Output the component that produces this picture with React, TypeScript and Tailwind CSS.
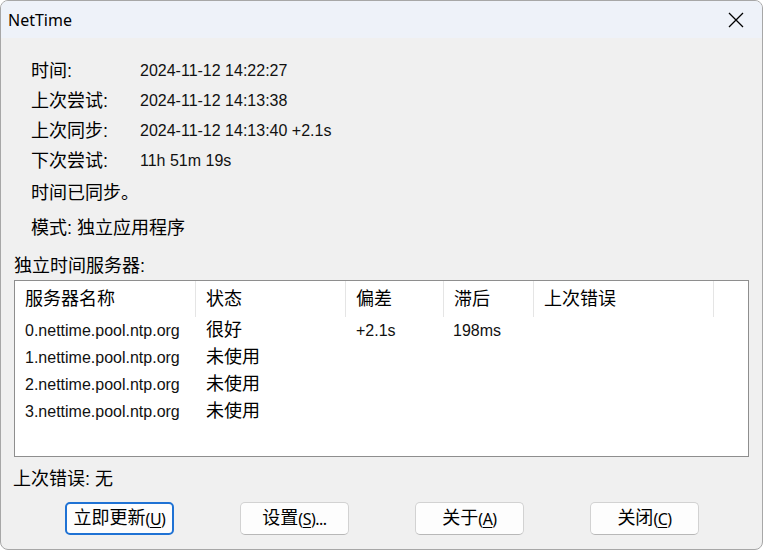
import React from "react";

const cjk = "font-['Liberation_Sans','Noto_Sans_CJK_SC',sans-serif]";
const latin = "font-['Liberation_Sans',Arial,sans-serif]";

const info = [
  { label: "时间:", value: "2024-11-12 14:22:27" },
  { label: "上次尝试:", value: "2024-11-12 14:13:38" },
  { label: "上次同步:", value: "2024-11-12 14:13:40 +2.1s" },
  { label: "下次尝试:", value: "11h 51m 19s" },
];

const columns = [
  { title: "服务器名称", width: "w-[181px]" },
  { title: "状态", width: "w-[150px]" },
  { title: "偏差", width: "w-[98px]" },
  { title: "滞后", width: "w-[90px]" },
  { title: "上次错误", width: "w-[180px]" },
];

const servers = [
  { name: "0.nettime.pool.ntp.org", status: "很好", offset: "+2.1s", lag: "198ms" },
  { name: "1.nettime.pool.ntp.org", status: "未使用", offset: "", lag: "" },
  { name: "2.nettime.pool.ntp.org", status: "未使用", offset: "", lag: "" },
  { name: "3.nettime.pool.ntp.org", status: "未使用", offset: "", lag: "" },
];

function DialogButton({ label, hotkey, suffix, focused }: { label: string; hotkey: string; suffix?: string; focused?: boolean }) {
  return (
    <button
      className={`w-[109px] h-[33px] rounded-[5px] bg-[#fdfdfd] flex items-center justify-center text-[18px] text-black ${cjk} ${
        focused ? "border-2 border-[#1f72d4]" : "border border-[#d2d2d2] border-b-[#b8b8b8]"
      }`}
    >
      <span>{label}</span>
      <span className="font-['Noto_Sans',sans-serif] text-[16px] tracking-[-0.5px]">
        (<span className="underline underline-offset-2">{hotkey}</span>){suffix}
      </span>
    </button>
  );
}

export default function App() {
  return (
    <div className="w-[764px] h-[551px] bg-white">
      <div className="w-[763px] h-[550px] rounded-[8px] border border-[#a7a7a7] overflow-hidden flex flex-col bg-[#f0f0f0] text-black">
        <div className="h-[37px] shrink-0 bg-[#eef2f9] flex items-center justify-between pl-[7px] pr-[18px]">
          <span className="font-['Noto_Sans',sans-serif] text-[16px]">NetTime</span>
          <svg width="16" height="16" viewBox="0 0 16 16" className="text-black">
            <path d="M1 1 L15 15 M15 1 L1 15" stroke="currentColor" strokeWidth="1.3" />
          </svg>
        </div>

        <div className="flex-1 flex flex-col">
          <div className="pl-[30px] pt-[18px] grid grid-cols-[109px_1fr]">
            {info.map((row) => (
              <React.Fragment key={row.label}>
                <div className={`h-[30px] flex items-center text-[18px] ${cjk}`}>{row.label}</div>
                <div className={`h-[30px] flex items-center text-[16px] text-[#111] ${latin}`}>{row.value}</div>
              </React.Fragment>
            ))}
          </div>
          <div className={`pl-[30px] mt-[2px] h-[30px] flex items-center text-[18px] ${cjk}`}>时间已同步。</div>
          <div className={`pl-[30px] mt-[5px] h-[30px] flex items-center text-[18px] ${cjk}`}>模式: 独立应用程序</div>

          <div className={`pl-[13px] mt-[9px] h-[28px] flex items-center text-[18px] ${cjk}`}>独立时间服务器:</div>
          <div className="mx-[13px] h-[177px] bg-white border border-[#8e8e8e] flex flex-col">
            <div className="h-[36px] flex">
              {columns.map((c) => (
                <div key={c.title} className={`${c.width} h-full flex items-center pl-[10px] border-r border-[#e5e5e5] text-[18px] ${cjk}`}>
                  {c.title}
                </div>
              ))}
            </div>
            {servers.map((s) => (
              <div key={s.name} className="h-[27px] flex items-center">
                <div className={`w-[181px] pl-[10px] text-[16px] text-[#111] ${latin}`}>{s.name}</div>
                <div className={`w-[150px] pl-[10px] text-[18px] ${cjk}`}>{s.status}</div>
                <div className={`w-[98px] pl-[10px] text-[16px] text-[#111] ${latin}`}>{s.offset}</div>
                <div className={`w-[90px] pl-[9px] text-[16px] text-[#111] ${latin}`}>{s.lag}</div>
              </div>
            ))}
          </div>

          <div className={`pl-[12px] mt-[9px] h-[26px] flex items-center text-[18px] ${cjk}`}>上次错误: 无</div>

          <div className="mt-[10px] flex pl-[64px] gap-[66px]">
            <DialogButton label="立即更新" hotkey="U" focused />
            <DialogButton label="设置" hotkey="S" suffix="..." />
            <DialogButton label="关于" hotkey="A" />
            <DialogButton label="关闭" hotkey="C" />
          </div>
        </div>
      </div>
    </div>
  );
}
